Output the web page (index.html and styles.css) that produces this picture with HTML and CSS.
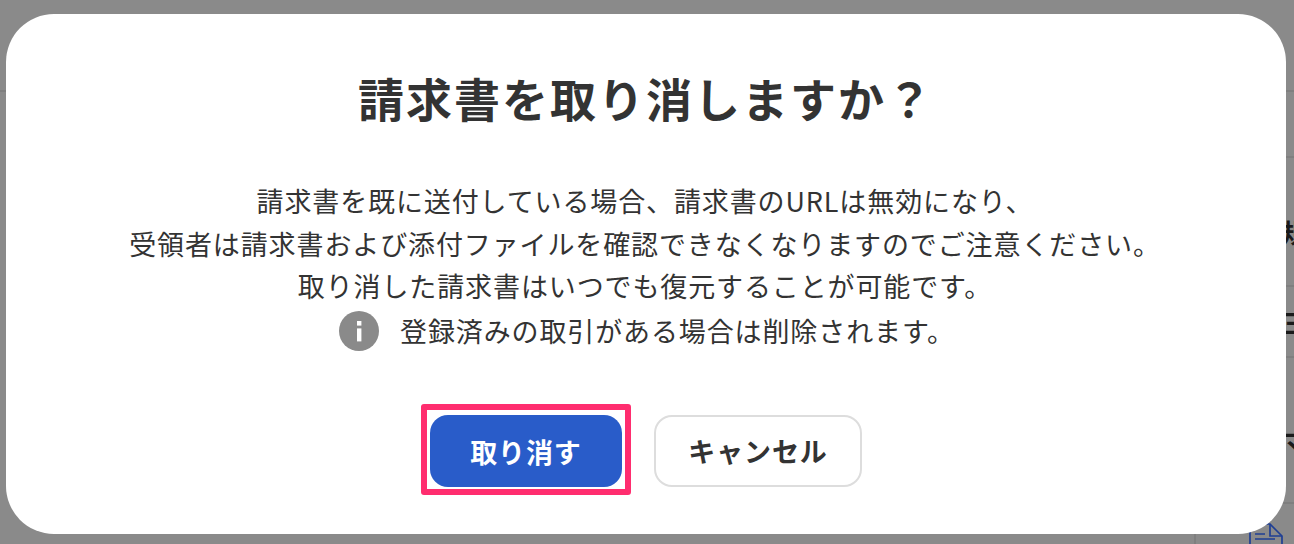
FILE: index.html
```html
<!DOCTYPE html>
<html lang="ja">
<head>
    <meta charset="UTF-8">
    <title>請求書を取り消しますか？</title>
    <link rel="stylesheet" href="styles.css">
</head>
<body>
    <!-- 背面の一覧 -->
    <div class="page">
        <div class="row-head"></div>
        <div class="row row-a"></div>
        <div class="row row-b"><span class="cell-text">規</span></div>
        <div class="row row-c"><span class="cell-text">三</span></div>
        <div class="row row-d"><span class="cell-text">マ</span></div>
        <div class="row-e">
            <div class="doc-cell">
                <svg class="doc-icon" viewBox="0 0 34 40" width="34" height="40" aria-hidden="true">
                    <path d="M1 40V1h20l12 12v27" fill="none" stroke="#1f3f94" stroke-width="1.7"/>
                    <path d="M21 1v12h12M6 11h10M6 16h20" fill="none" stroke="#1f3f94" stroke-width="1.7"/>
                </svg>
            </div>
        </div>
    </div>

    <!-- 確認モーダル -->
    <div class="overlay">
        <div class="modal">
            <h2 class="modal-title">請求書を取り消しますか？</h2>
            <div class="modal-body">
                <p>請求書を既に送付している場合、請求書のURLは無効になり、</p>
                <p>受領者は請求書および添付ファイルを確認できなくなりますのでご注意ください。</p>
                <p>取り消した請求書はいつでも復元することが可能です。</p>
                <p class="note">
                    <svg class="info-icon" viewBox="0 0 40 40" width="40" height="40" aria-hidden="true">
                        <circle cx="20" cy="20" r="20" fill="#8a8a8a"/>
                        <rect x="18" y="10" width="4.4" height="4.6" fill="#fff"/>
                        <rect x="18" y="17.4" width="4.4" height="13" fill="#fff"/>
                    </svg>
                    <span>登録済みの取引がある場合は削除されます。</span>
                </p>
            </div>
            <div class="modal-actions">
                <div class="focus-mark">
                    <button class="btn btn-primary">取り消す</button>
                </div>
                <button class="btn btn-cancel">キャンセル</button>
            </div>
        </div>
    </div>
</body>
</html>
```

FILE: styles.css
```css
* {
    margin: 0;
    padding: 0;
    box-sizing: border-box;
}

html, body {
    width: 100%;
    height: 100%;
    overflow: hidden;
    background: #8a8a8a;
    font-family: "Noto Sans CJK JP", "Noto Sans", sans-serif;
    color: #333;
}

/* 背面の一覧 */
.page {
    height: 544px;
    display: flex;
    flex-direction: column;
    overflow: hidden;
}

.row-head {
    height: 92px;
    flex-shrink: 0;
    border-bottom: 2px solid #7f7f7f;
}

.row {
    display: flex;
    justify-content: flex-end;
    align-items: center;
    flex-shrink: 0;
    margin-left: 40px;
    border-bottom: 2px solid #7f7f7f;
    overflow: hidden;
}

.row-a { height: 66px; }
.row-b { height: 129px; padding-top: 20px; }
.row-c { height: 71px; }
.row-d { height: 146px; padding-top: 20px; }

.row-e {
    flex: 1;
    display: flex;
    justify-content: flex-end;
}

.doc-cell {
    width: 100px;
    border-left: 2px solid #7f7f7f;
    padding: 19px 11px 0 0;
    display: flex;
    justify-content: flex-end;
    overflow: hidden;
}

.doc-icon {
    flex-shrink: 0;
}

.cell-text {
    font-size: 26px;
    font-weight: 700;
    color: #1a1a1a;
    margin-right: -14px;
}

/* モーダル */
.overlay {
    position: fixed;
    top: 0;
    left: 0;
    width: 100%;
    height: 100%;
    padding: 14px 8px 10px 6px;
}

.modal {
    height: 520px;
    background: #fff;
    border-radius: 48px;
    display: flex;
    flex-direction: column;
    align-items: center;
}

.modal-title {
    margin-top: 49px;
    font-size: 46px;
    line-height: 68px;
    font-weight: 700;
    letter-spacing: 2px;
    color: #333;
}

.modal-body {
    margin-top: 49px;
    margin-right: 2px;
    font-size: 27px;
    line-height: 42.5px;
    letter-spacing: 0.88px;
    text-align: center;
    color: #333;
}

.note {
    margin-top: 2px;
    margin-left: 4px;
    display: flex;
    justify-content: center;
    align-items: center;
    gap: 21px;
}

.modal-actions {
    margin-top: 52px;
    margin-right: 9px;
    display: flex;
    align-items: center;
    gap: 23px;
}

.focus-mark {
    padding: 5px 3px 2px;
    border: 6px solid #ff2d6f;
    border-radius: 3px;
}

.btn {
    height: 72px;
    border-radius: 18px;
    font-family: inherit;
    font-size: 27px;
    font-weight: 700;
    letter-spacing: 0.88px;
    cursor: pointer;
}

.btn-primary {
    display: block;
    width: 192px;
    background: #295cc9;
    color: #fff;
    border: none;
}

.btn-cancel {
    width: 208px;
    margin-top: 2px;
    background: #fff;
    color: #333;
    border: 2px solid #ddd;
}
```
